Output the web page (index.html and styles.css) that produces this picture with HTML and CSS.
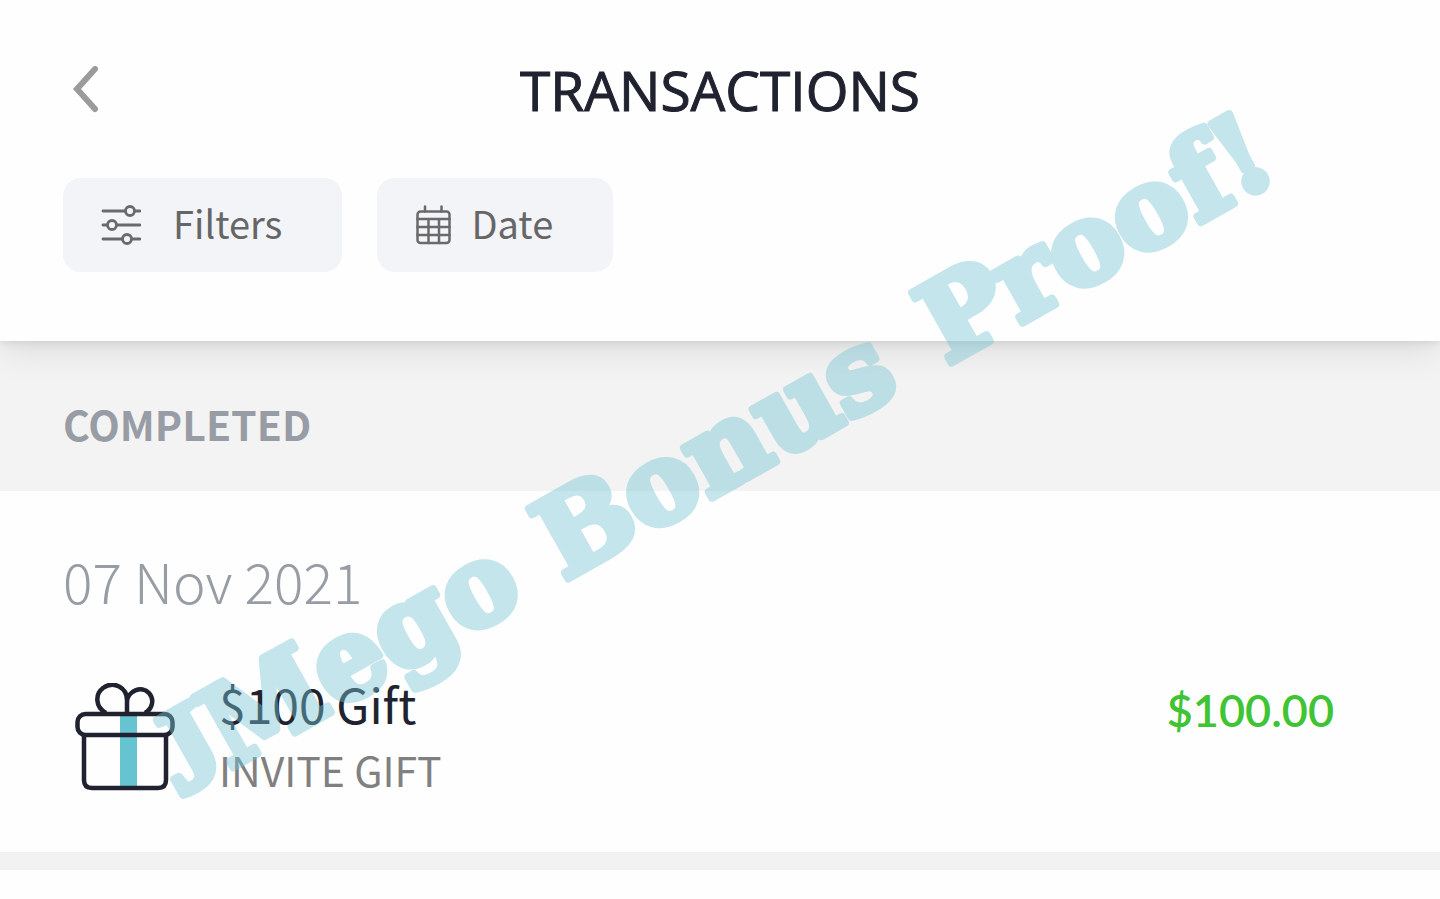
FILE: index.html
```html
<!DOCTYPE html>
<html lang="en">
<head>
<meta charset="utf-8">
<meta name="viewport" content="width=device-width, initial-scale=1">
<title>Transactions</title>
<link rel="stylesheet" href="styles.css">
</head>
<body>
<div class="screen">
  <header class="header">
    <div class="title-bar">
      <button class="back" type="button" aria-label="Back">
        <svg width="28" height="48" viewBox="0 0 28 48" fill="none" stroke="#9b9b9b" stroke-width="6" stroke-linecap="round"><path d="M24 3 6 23l18 20"/></svg>
      </button>
      <h1 class="title">TRANSACTIONS</h1>
    </div>
    <div class="chips">
      <button class="chip chip-filters" type="button">
        <svg width="40" height="40" viewBox="0 0 40 40" fill="none" stroke="#6a6a6a" stroke-width="2.8" stroke-linecap="round"><path d="M2 6H24m10 0h5M2 20H6m10 0h23M2 34H21m10 0h8"/><circle cx="29" cy="6" r="4.500"/><circle cx="11" cy="20" r="4.500"/><circle cx="26" cy="34" r="4.500"/></svg>
        Filters
      </button>
      <button class="chip chip-date" type="button">
        <svg width="36" height="40" viewBox="0 0 36 40" fill="none" stroke="#6a6a6a" stroke-width="2.500" stroke-linecap="round"><rect x="2.500" y="6.500" width="32" height="31.500" rx="3"/><path d="M10 1.500v5m16.500-5v5M2.500 14h32M2.500 22h32M2.500 30h32M13.500 14v24M24 14v24"/></svg>
        Date
      </button>
    </div>
  </header>
  <main>
    <h2 class="status">COMPLETED</h2>
    <section class="day">
      <h3 class="day-date">07 Nov 2021</h3>
      <div class="row">
        <svg class="gift" width="100" height="108" viewBox="0 0 100 108" fill="none" stroke="#20232f" stroke-width="4.500"><path d="M45 32h17v73H45z" fill="#65c4cf" stroke="none"/><path d="M9 52v45q0 8 8 8h66q8 0 8-8V52"/><rect x="2.500" y="31" width="95" height="21" rx="8"/><path d="M31 30C20 24 20 11 28 5c11-8 24 0 24 12v13m0-11C52 8 67 2 74 10c6 7 3 16-4 20"/></svg>
        <div class="details">
          <span class="name">$100 Gift</span>
          <span class="kind">INVITE GIFT</span>
        </div>
        <span class="amount">$100.00</span>
      </div>
    </section>
  </main>
  <svg class="watermark" width="1440" height="899" viewBox="0 0 1440 899">
    <text transform="translate(170 803) rotate(-29.400)"><tspan class="initial" x="10">J</tspan><tspan x="68">Mego</tspan> <tspan x="452">Bonus</tspan> <tspan x="892">Proof!</tspan></text>
  </svg>
</div>
</body>
</html>
```
FILE: styles.css
```css
* { box-sizing: border-box; }

body {
  margin: 0;
  background: #fefefe;
  color: #20232f;
  font-family: "Noto Sans CJK SC", "Noto Sans", sans-serif;
}

h1, h2, h3 { margin: 0; }

button {
  border: 0;
  padding: 0;
  background: none;
  font: inherit;
  cursor: pointer;
}

svg { display: block; flex: none; }

.screen {
  position: relative;
  min-height: 100vh;
  overflow: hidden;
}

.header {
  position: relative;
  padding: 60px 63px 69px;
  background: #fefefe;
  box-shadow: 0 8px 34px rgba(0, 0, 0, 0.1), 0 0 10px rgba(0, 0, 0, 0.12);
}

.title-bar {
  display: grid;
  grid-template-columns: 40px 1fr 40px;
  align-items: center;
  height: 60px;
  margin-bottom: 58px;
}

.back { padding-left: 8px; }

.title {
  font: 500 55px/60px "Open Sans", sans-serif;
  -webkit-text-stroke: 1px #20232f;
  text-align: center;
}

.chips { display: flex; gap: 35px; }

.chip {
  display: flex;
  align-items: center;
  height: 94px;
  padding: 0 60px 4px 38px;
  border-radius: 18px;
  background: #f3f4f8;
  color: #666;
  font-size: 38px;
  line-height: 52px;
}

.chip svg { margin-top: 4px; }
.chip-filters { gap: 32px; }
.chip-date { gap: 20px; }

.status {
  padding: 52px 63px 38px;
  background: #f3f3f3;
  color: #979ca5;
  font-size: 41px;
  font-weight: 700;
  line-height: 60px;
}

.day {
  padding: 49px 63px 49px;
  border-bottom: 18px solid #f2f2f2;
}

.day-date {
  color: #979ca5;
  font-size: 55px;
  font-weight: 300;
  line-height: 80px;
}

.row {
  display: flex;
  align-items: center;
  padding: 51px 43px 0 12px;
}

.details {
  display: flex;
  flex-direction: column;
  margin-left: 44px;
}

.name { font-size: 48px; line-height: 64px; }
.kind { color: #808080; font-size: 41px; line-height: 68px; }

.amount {
  align-self: flex-start;
  margin: 11px 0 0 auto;
  color: #3fc433;
  font: 600 45px/56px Lato, sans-serif;
}

.watermark {
  position: absolute;
  left: 0;
  top: 0;
  overflow: visible;
  fill: #76c5d3;
  stroke: #76c5d3;
  stroke-width: 8px;
  stroke-linejoin: round;
  font: 700 110px "DejaVu Serif", serif;
  opacity: 0.43;
  pointer-events: none;
}

.initial {
  font-family: "Liberation Serif", serif;
  font-size: 120px;
}
```
